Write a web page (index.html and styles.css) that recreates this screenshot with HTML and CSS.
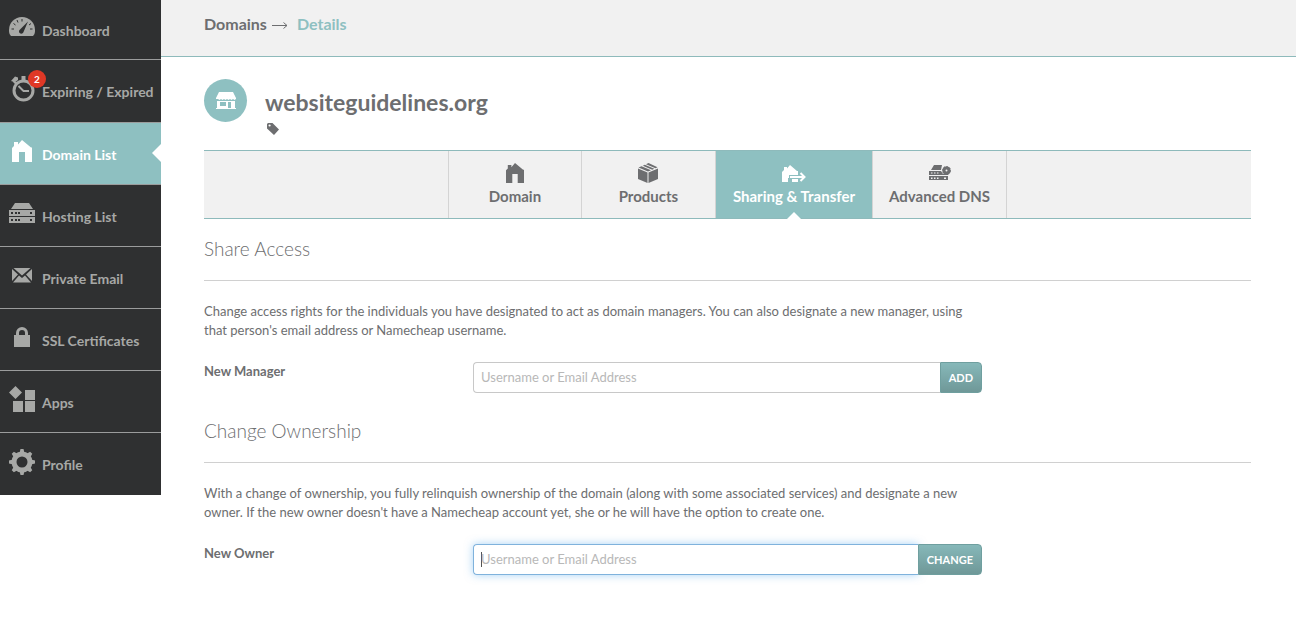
FILE: index.html
```html
<!DOCTYPE html>
<html lang="en">
<head>
  <meta charset="UTF-8">
  <title>Domain Details</title>
  <link rel="stylesheet" href="styles.css">
</head>
<body>

<svg class="sprite" aria-hidden="true">
  <symbol id="house" viewBox="0 0 20 22">
    <path d="M2 2h4v2.500L10 0l9 7.500h1V22h-7V12H7v10H0V8l2-2z"/>
  </symbol>
  <symbol id="servers" viewBox="0 0 26 20">
    <path fill-rule="evenodd" d="M6 0h14l4 6H2zM0 7h26v6H0zM2 9h2v2H2zM6 9h2v2H6zM9 9h2v2H9zM21 9h2v2h-2zM0 14h26v6H0zM2 16h2v2H2zM6 16h2v2H6zM9 16h2v2H9zM21 16h2v2h-2z"/>
  </symbol>
</svg>

<div class="layout">
  <nav class="sidebar">
    <a href="#">
      <span class="icon">
        <svg width="26" height="20" viewBox="0 0 26 20">
          <path d="M2 19C0 17 0 15 0 13a13 13 0 0 1 26 0c0 2 0 4-2 6z"/>
          <g class="cut">
            <path d="M19 4.500L14.500 15a2.300 2.300 0 1 1-3.500-2.500z"/>
            <path class="ticks" d="M13 2v2.500M8 3l1 2.500M4.500 6.500l2 1.500M2.500 12H5M21 12h2.500M20 8l2-1.500"/>
          </g>
        </svg>
      </span>
      Dashboard
    </a>
    <a href="#">
      <span class="icon">
        <svg width="26" height="26" viewBox="0 0 26 26">
          <path d="M12.500 0h4v5h-4zM2 5l4-4.500 3 1V4L7 5.500 5 6zM5 4l4 3-2 2-3-3zM20 5l2-2 3 3-2 2z"/>
          <circle class="line" cx="14.500" cy="14.500" r="9.500"/>
          <path class="line thin" d="M9.500 10l5 5H20"/>
        </svg>
        <span class="badge">2</span>
      </span>
      Expiring / Expired
    </a>
    <a href="#" class="active">
      <span class="icon"><svg width="20" height="22"><use href="#house"/></svg></span>
      Domain List
    </a>
    <a href="#">
      <span class="icon"><svg width="26" height="20"><use href="#servers"/></svg></span>
      Hosting List
    </a>
    <a href="#">
      <span class="icon">
        <svg width="20" height="15" viewBox="0 0 20 15">
          <path d="M1.500 0h17L10 7.500zM0 1l6 5.500L0 13zM20 1l-6 5.500 6 6.500zM7 7.500l3 2.500 3-2.500 6 7H1z"/>
        </svg>
      </span>
      Private Email
    </a>
    <a href="#">
      <span class="icon">
        <svg width="16" height="20" viewBox="0 0 16 20">
          <path d="M0 8h16v12H0z"/>
          <path class="line" d="M3.500 9V6a4.500 4.500 0 0 1 9 0v3"/>
        </svg>
      </span>
      SSL Certificates
    </a>
    <a href="#">
      <span class="icon">
        <svg width="26" height="26" viewBox="0 0 26 26">
          <path d="M6.500 0L13 6.500 6.500 13 0 6.500zM16 4h10v10H16zM4 15h10v11H4zM16 15h10v11H16z"/>
        </svg>
      </span>
      Apps
    </a>
    <a href="#">
      <span class="icon">
        <svg width="26" height="26" viewBox="0 0 26 26">
          <circle class="line gear" cx="13" cy="13" r="8"/>
          <g>
            <path id="tooth" d="M10.500 4l1-4h3l1 4z"/>
            <use href="#tooth" transform="rotate(45 13 13)"/>
            <use href="#tooth" transform="rotate(90 13 13)"/>
            <use href="#tooth" transform="rotate(135 13 13)"/>
            <use href="#tooth" transform="rotate(180 13 13)"/>
            <use href="#tooth" transform="rotate(225 13 13)"/>
            <use href="#tooth" transform="rotate(270 13 13)"/>
            <use href="#tooth" transform="rotate(315 13 13)"/>
          </g>
        </svg>
      </span>
      Profile
    </a>
  </nav>

  <div class="content">
    <header class="breadcrumb">
      <a href="#">Domains</a>
      <svg width="16" height="12" viewBox="0 0 16 12"><path class="line hair" d="M0 7.500h15M11.500 4.500l3.500 3-3.500 3"/></svg>
      <span class="current">Details</span>
    </header>

    <main>
      <div class="domain">
        <span class="domain-logo">
          <svg width="20" height="18" viewBox="0 0 20 18">
            <path fill-rule="evenodd" d="M3 0h14l3 6v1l-1.500 1L17 7l-1.500 1L14 7l-1.500 1L11 7 9.500 8 8 7 6.500 8 5 7 3.500 8 2 7 0 7V6zM1 9h18v7h1v1H0v-1h1zM4 10v4h6v-4zM12 10v6h3v-6z"/>
          </svg>
        </span>
        <div>
          <h1>websiteguidelines.org</h1>
          <svg class="tag" width="12" height="12" viewBox="0 0 12 12">
            <path fill-rule="evenodd" d="M0 1l1-1h4.500L12 6.500 7 12 0 5.500zM1.500 2.500a1.100 1.100 0 1 0 2.200 0 1.100 1.100 0 1 0-2.200 0z"/>
          </svg>
        </div>
      </div>

      <nav class="tabs">
        <a href="#">
          <svg width="18" height="20"><use href="#house"/></svg>
          Domain
        </a>
        <a href="#">
          <svg width="20" height="20" viewBox="0 0 20 20">
            <path d="M0 5.500l9.500 4V20L0 16zM20 5.500l-9.500 4V20l9.500-4zM.5 4.500l3-1.300 9.500 4-3 1.300zM4.800 2.700l2-.9 9.500 4-2 .9zM8 1.300L10.500 0l9 4.300-2 1z"/>
          </svg>
          Products
        </a>
        <a href="#" class="active">
          <svg width="24" height="18" viewBox="0 0 24 18">
            <path d="M2 2h3v1.500L8 0l7 6h1v4H7v3h-1v4H0V7l2-2zM10 14h6v3h-6z"/>
            <path class="line thin" d="M8 12h14"/>
            <path class="line thin" d="M18.500 8l4 4-4 4"/>
          </svg>
          Sharing &amp; Transfer
        </a>
        <a href="#">
          <svg width="22" height="18" viewBox="0 0 22 18">
            <path fill-rule="evenodd" d="M5 0h8l-1 5H2zM0 6h12l2 3h5v1H0zM2 7.500h1.500v1H2zM5 7.500h1.500v1H5zM8 7.500h1.500v1H8zM0 11h19v4H0zM2 12.500h1.500V14H2zM5 12.500h1.500V14H5zM8 12.500h1.500V14H8zM15 12.500h2V14h-2z"/>
            <circle class="line" cx="17.500" cy="5.500" r="2.500"/>
            <circle class="line teeth" cx="17.500" cy="5.500" r="4"/>
          </svg>
          Advanced DNS
        </a>
      </nav>

      <section>
        <h2>Share Access</h2>
        <p>Change access rights for the individuals you have designated to act as domain managers. You can also designate a new manager, using that person's email address or Namecheap username.</p>
        <form class="row">
          <label for="manager">New Manager</label>
          <div class="field">
            <input type="text" id="manager" placeholder="Username or Email Address">
            <button type="button">ADD</button>
          </div>
        </form>
      </section>

      <section>
        <h2>Change Ownership</h2>
        <p>With a change of ownership, you fully relinquish ownership of the domain (along with some associated services) and designate a new owner. If the new owner doesn't have a Namecheap account yet, she or he will have the option to create one.</p>
        <form class="row">
          <label for="owner">New Owner</label>
          <div class="field">
            <input type="text" id="owner" placeholder="Username or Email Address" autofocus>
            <button type="button">CHANGE</button>
          </div>
        </form>
      </section>
    </main>
  </div>
</div>

</body>
</html>
```
FILE: styles.css
```css
* {
  box-sizing: border-box;
}

body {
  margin: 0;
  background: #fff;
  color: #6d6e70;
  font-family: Lato, "Open Sans", sans-serif;
  font-size: 13px;
  line-height: 19px;
}

a {
  color: inherit;
  text-decoration: none;
}

svg {
  fill: currentColor;
  flex: none;
}

.sprite {
  display: none;
}

.line {
  fill: none;
  stroke: currentColor;
  stroke-width: 3;
}

.thin {
  stroke-width: 2;
}

.hair {
  stroke-width: 1;
}

.gear {
  stroke-width: 5;
}

.teeth {
  stroke-width: 1;
  stroke-dasharray: 2 1;
}

.layout {
  display: flex;
  align-items: flex-start;
}

/* sidebar */
.sidebar {
  flex: none;
  width: 161px;
  background: #2f3031;
  color: #a7a8a6;
  font-size: 14px;
  font-weight: bold;
}

.sidebar a {
  position: relative;
  display: flex;
  align-items: center;
  gap: 7px;
  height: 62px;
  padding-left: 9px;
  padding-top: 1px;
  border-bottom: 1px solid #9b9c9c;
  white-space: nowrap;
}

.sidebar a:first-child {
  height: 60px;
}

.sidebar a:nth-child(2) {
  height: 63px;
}

.sidebar a:last-child {
  border-bottom: 0;
}

.sidebar .active {
  background: #8ec0c1;
  color: #fff;
}

/* notch pointing into the page */
.sidebar .active::after {
  content: "";
  position: absolute;
  right: 0;
  top: 21px;
  border: 9px solid transparent;
  border-left-width: 0;
  border-right-color: #fff;
}

.icon {
  position: relative;
  display: flex;
  justify-content: center;
  width: 26px;
  padding-bottom: 6px;
}

.cut {
  fill: #2f3031;
}

.ticks {
  fill: none;
  stroke: #2f3031;
  stroke-width: 1;
}

.badge {
  position: absolute;
  top: -6px;
  left: 19px;
  width: 18px;
  height: 18px;
  border-radius: 50%;
  background: #df3826;
  color: #fff;
  font-size: 10px;
  line-height: 18px;
  text-align: center;
}

/* page */
.content {
  flex: 1;
  min-width: 0;
}

.breadcrumb {
  display: flex;
  align-items: center;
  gap: 5px;
  height: 57px;
  padding: 0 43px 9px;
  background: #f1f1f1;
  border-bottom: 1px solid #8ebabb;
  font-size: 16px;
  font-weight: bold;
}

.current {
  margin-left: 4px;
  color: #8ec0c1;
}

main {
  padding: 22px 45px 40px 43px;
}

.domain {
  display: flex;
  gap: 18px;
  height: 71px;
}

.domain-logo {
  display: flex;
  align-items: center;
  justify-content: center;
  flex: none;
  width: 43px;
  height: 43px;
  border-radius: 50%;
  background: #8ec0c1;
  color: #fff;
}

h1 {
  margin: 9px 0 7px;
  font-size: 23px;
  line-height: 28px;
}

.tag {
  display: block;
  margin-left: 2px;
}

.tabs {
  display: flex;
  justify-content: center;
  height: 69px;
  background: #f1f1f1;
  border-top: 1px solid #8ebabb;
  border-bottom: 1px solid #8ebabb;
  font-size: 15px;
  font-weight: bold;
}

.tabs a {
  position: relative;
  display: flex;
  flex-direction: column;
  align-items: center;
  justify-content: flex-end;
  gap: 4px;
  min-width: 134px;
  padding: 0 16px 12px;
  border-right: 1px solid #d4d4d4;
}

.tabs a:first-child {
  border-left: 1px solid #d4d4d4;
}

.tabs .active {
  padding-left: 17px;
  padding-right: 17px;
  background: #8ec0c1;
  color: #fff;
}

.tabs .active::after {
  content: "";
  position: absolute;
  bottom: -1px;
  border: 7px solid transparent;
  border-top-width: 0;
  border-bottom-color: #fff;
}

h2 {
  margin: 0;
  padding: 18px 0 19px;
  border-bottom: 1px solid #d0d0d0;
  font-size: 19px;
  font-weight: 300;
  line-height: 24px;
}

section {
  margin-bottom: 8px;
}

p {
  max-width: 784px;
  margin: 21px 0 22px;
}

.row {
  display: grid;
  grid-template-columns: 269px 1fr;
  max-width: 778px;
}

label {
  font-weight: bold;
}

.field {
  display: flex;
  height: 31px;
}

input {
  flex: 1;
  min-width: 0;
  padding: 0 7px;
  border: 1px solid #c8c8c8;
  border-right: 0;
  border-radius: 4px 0 0 4px;
  color: #6d6e70;
  font: inherit;
}

input::placeholder {
  color: #b8b8b8;
}

input:focus {
  border-color: #7fb2dc;
  outline: 0;
  box-shadow: 0 0 8px rgba(82, 168, 236, 0.5);
}

/* steady caret while the box is empty */
input:focus:placeholder-shown {
  background: linear-gradient(#555, #555) 7px center / 1px 15px no-repeat;
  caret-color: transparent;
}

button {
  position: relative;
  padding: 0 8px;
  border: 1px solid #6f9f9f;
  border-radius: 0 4px 4px 0;
  background: linear-gradient(#86b8b9, #6f9898);
  color: #fff;
  font: bold 11px Lato, "Open Sans", sans-serif;
}
```
